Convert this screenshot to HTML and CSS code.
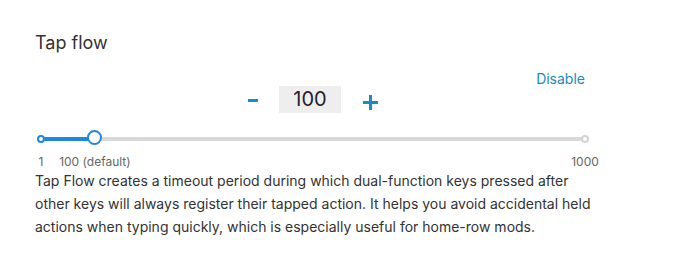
FILE: index.html
```html
<!DOCTYPE html>
<html lang="en">
<head>
<meta charset="utf-8">
<title>Tap flow</title>
<link rel="stylesheet" href="styles.css">
</head>
<body>
<section class="panel">
  <h2 class="title">Tap flow</h2>
  <div class="controls">
    <div class="actions"><a class="link" href="#">Disable</a></div>
    <div class="stepper">
      <button class="step minus" aria-label="Decrease">
        <svg width="10" height="3" viewBox="0 0 10 3"><rect x="0" y="0" width="10" height="3" fill="currentColor"/></svg>
      </button>
      <div class="value">100</div>
      <button class="step plus" aria-label="Increase">
        <svg width="15" height="15" viewBox="0 0 15 15"><rect x="0" y="6" width="15" height="3" fill="currentColor"/><rect x="6" y="0" width="3" height="15" fill="currentColor"/></svg>
      </button>
    </div>
    <div class="slider">
      <div class="rail">
        <div class="fill" style="width:9.91%"></div>
        <span class="dot dot-start"></span>
        <span class="dot dot-end"></span>
        <span class="thumb" style="left:9.91%"></span>
      </div>
      <div class="marks">
        <span class="mark" style="left:0%">1</span>
        <span class="mark" style="left:9.91%">100 (default)</span>
        <span class="mark" style="left:100%">1000</span>
      </div>
    </div>
  </div>
  <p class="desc">Tap Flow creates a timeout period during which dual-function keys pressed after other keys will always register their tapped action. It helps you avoid accidental held actions when typing quickly, which is especially useful for home-row mods.</p>
</section>
</body>
</html>
```

FILE: styles.css
```css
html, body {
  margin: 0;
  padding: 0;
  background: #ffffff;
}

body {
  font-family: Inter, "Noto Sans", "Liberation Sans", sans-serif;
  color: #333333;
}

.panel {
  padding: 32px 0 0 35px;
  width: 556px;
}

.title {
  margin: 0;
  font-size: 18px;
  line-height: 22px;
  font-weight: 400;
  color: #333333;
}

.controls {
  margin-top: 17px;
}

.actions {
  display: flex;
  justify-content: flex-end;
  padding-right: 6px;
  height: 15px;
}

.link {
  font-size: 14px;
  line-height: 15px;
  color: #1a8cc4;
  text-decoration: none;
}

.stepper {
  display: flex;
  align-items: center;
  justify-content: center;
  gap: 21px;
  height: 27px;
}

.step {
  display: flex;
  align-items: center;
  justify-content: center;
  padding: 0;
  margin: 0;
  border: 0;
  background: none;
  color: #1a8cc4;
  cursor: pointer;
}

.step svg {
  display: block;
}

.minus {
  width: 10px;
  height: 27px;
  padding-top: 2px;
}

.plus {
  width: 15px;
  height: 27px;
  margin-left: 1px;
  padding-top: 5px;
}

.value {
  width: 62px;
  height: 27px;
  background: #eeeeee;
  font-size: 20px;
  line-height: 27px;
  text-align: center;
  color: #1f2230;
}

.slider {
  margin-top: 24px;
  padding: 0 6px;
}

.rail {
  position: relative;
  height: 4px;
  border-radius: 2px;
  background: #d9d9d9;
}

.fill {
  height: 4px;
  border-radius: 2px;
  background: #1f87e0;
}

.dot {
  position: absolute;
  top: -2px;
  width: 4px;
  height: 4px;
  border-radius: 50%;
  background: #ffffff;
  border: 2px solid #1f87e0;
}

.dot-start {
  left: -4px;
}

.dot-end {
  right: -4px;
  border-color: #d3d3d3;
}

.thumb {
  position: absolute;
  top: -7px;
  width: 11px;
  height: 11px;
  margin-left: -7.5px;
  border-radius: 50%;
  background: #ffffff;
  border: 2px solid #1f87e0;
}

.marks {
  position: relative;
  height: 13px;
  margin-top: 14px;
}

.mark {
  position: absolute;
  top: 0;
  transform: translateX(-50%);
  font-size: 12px;
  line-height: 13px;
  color: #666666;
  white-space: nowrap;
}

.desc {
  margin: 1px 0 0 0;
  font-size: 14px;
  line-height: 23px;
  color: #333333;
}
```
